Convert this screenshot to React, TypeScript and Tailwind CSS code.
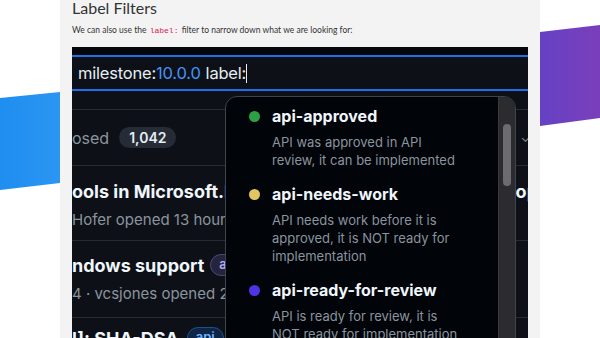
const labels = [
  {
    name: "api-approved",
    color: "bg-[#2ea043]",
    desc: ["API was approved in API", "review, it can be implemented"],
  },
  {
    name: "api-needs-work",
    color: "bg-[#e3c65f]",
    desc: ["API needs work before it is", "approved, it is NOT ready for", "implementation"],
  },
  {
    name: "api-ready-for-review",
    color: "bg-[#4f34e6]",
    desc: ["API is ready for review, it is", "NOT ready for implementation"],
  },
];

const LabelDropdown = () => {
  return (
    <div className="absolute left-[153px] top-[49px] w-[291px] h-[320px] rounded-[12px] border border-[#3d444d] bg-[#010409] overflow-hidden">
      {/* items */}
      <div className="flex flex-col gap-[15px] pt-[9px] pl-[23px]">
        {labels.map((l) => (
          <div key={l.name} className="flex flex-col">
            <div className="flex items-center h-[20px]">
              <span className={`w-[11px] h-[11px] rounded-full shrink-0 ${l.color}`} />
              <span className="ml-[12px] text-[16px] font-bold text-[#f0f6fc] leading-[20px]">{l.name}</span>
            </div>
            <div className="mt-[7px] pl-[23px] text-[13px] leading-[18px] text-[#8b949e]">
              {l.desc.map((d) => (
                <div key={d}>{d}</div>
              ))}
            </div>
          </div>
        ))}
      </div>

      {/* scrollbar */}
      <div className="absolute right-0 top-0 bottom-0 w-[17px] bg-[#2c2c2e] border-l border-[#3a3a3c] flex justify-center">
        <div className="mt-[27px] w-[8px] h-[62px] rounded-full bg-[#6c6c6e]" />
      </div>
    </div>
  );
};

const GithubShot = () => {
  return (
    <div className="relative w-[456px] shrink-0 bg-[#0d1117] overflow-hidden font-['Inter',sans-serif]">
      {/* search input */}
      <div className="h-[8px] bg-[#05070a]" />
      <div className="h-[2px] bg-[#1f6feb]" />
      <div className="h-[32px] flex items-center pl-[6px] text-[16.5px] text-[#e6edf3] tracking-[-0.2px]">
        <span>milestone:</span>
        <span className="text-[#4493f8]">10.0.0</span>
        <span className="ml-[5px]">label:</span>
        <span className="w-[1px] h-[19px] bg-[#e6edf3]" />
      </div>
      <div className="h-[2px] bg-[#1f6feb]" />

      {/* issue list */}
      <div className="h-[19px] border-b border-[#262c34]" />
      <div className="h-[56px] flex items-center justify-between border-b border-[#262c34]">
        <div className="flex items-center">
          <span className="text-[16px] text-[#8b949e]">osed</span>
          <span className="ml-[10px] px-[10px] h-[21px] flex items-center rounded-full bg-[#262c36] text-[14px] font-semibold text-[#e6edf3]">1,042</span>
        </div>
        <span className="mr-[-2px] text-[12px] text-[#8b949e]">⌄</span>
      </div>

      <div className="h-[75px] flex flex-col border-b border-[#262c34]">
        <div className="mt-[14px] flex justify-between items-center h-[22px]">
          <span className="text-[18px] font-bold text-[#f0f6fc] whitespace-nowrap">ools in Microsoft.Extensions</span>
          <span className="mr-[-10px] text-[18px] font-bold text-[#f0f6fc]">op</span>
        </div>
        <span className="mt-[7px] text-[15px] text-[#8b949e] whitespace-nowrap">Hofer opened 13 hours ago</span>
      </div>

      <div className="h-[77px] flex flex-col border-b border-[#262c34]">
        <div className="mt-[13px] flex items-center h-[22px]">
          <span className="text-[18px] font-bold text-[#f0f6fc] whitespace-nowrap">ndows support</span>
          <span className="ml-[6px] px-[8px] h-[22px] flex items-center rounded-full border border-[#4b4878] bg-[#26243d] text-[13px] font-semibold text-[#b6b0f5]">api</span>
        </div>
        <span className="mt-[7px] text-[15px] text-[#8b949e] whitespace-nowrap">4 · vcsjones opened 2 days ago</span>
      </div>

      <div className="flex items-center mt-[9px] h-[22px]">
        <span className="text-[18px] font-bold text-[#f0f6fc] whitespace-nowrap">l]: SHA-DSA</span>
        <span className="ml-[8px] px-[8px] h-[22px] flex items-center rounded-full border border-[#1f4f8a] bg-[#0f2545] text-[13px] font-semibold text-[#6cb6ff]">api</span>
      </div>

      <LabelDropdown />
    </div>
  );
};

const App = () => {
  return (
    <div className="w-[600px] h-[338px] bg-white flex overflow-hidden">
      {/* Left decoration */}
      <div className="w-[60px] h-full shrink-0">
        <svg width="60" height="338" viewBox="0 0 60 338">
          <defs>
            <linearGradient id="bl" x1="0" x2="1" y1="0" y2="0">
              <stop offset="0" stopColor="#1e8ef0" />
              <stop offset="1" stopColor="#2b95f2" />
            </linearGradient>
          </defs>
          <polygon points="0,98 60,92 60,183 0,190" fill="url(#bl)" />
        </svg>
      </div>

      {/* Slide content */}
      <div className="w-[480px] h-full shrink-0 bg-[#f3f3f3] flex flex-col pl-[12px]">
        <h1 className="h-[20px] -mt-[2px] text-[16px] leading-[20px] text-[#333] font-['Lato',sans-serif]">Label Filters</h1>
        <p className="mt-[6px] text-[8.5px] leading-[12px] text-[#333] font-['Lato',sans-serif]">
          We can also use the{" "}
          <code className="font-['Liberation_Mono',monospace] text-[8px] text-[#c7254e] bg-[#f9f2f4] px-[1px]">label:</code>{" "}
          filter to narrow down what we are looking for:
        </p>
        <div className="mt-[10px] flex-1 flex">
          <GithubShot />
        </div>
      </div>

      {/* Right decoration */}
      <div className="w-[60px] h-full shrink-0">
        <svg width="60" height="338" viewBox="0 0 60 338">
          <defs>
            <linearGradient id="pl" x1="0" x2="1" y1="0" y2="0">
              <stop offset="0" stopColor="#6541c4" />
              <stop offset="1" stopColor="#7a3fbb" />
            </linearGradient>
          </defs>
          <polygon points="0,32 60,25 60,118 0,126" fill="url(#pl)" />
        </svg>
      </div>
    </div>
  );
};

export default App;
